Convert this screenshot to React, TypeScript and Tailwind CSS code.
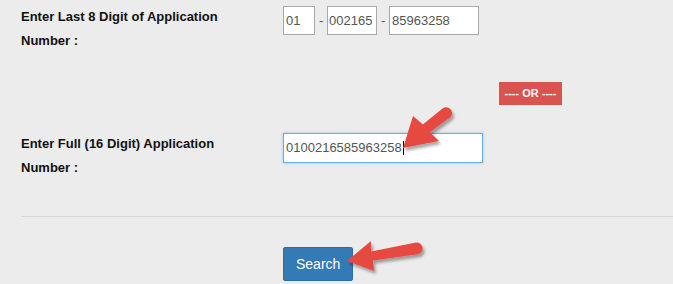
import React from "react";

const font = { fontFamily: '"Liberation Sans", Arial, sans-serif' };

function Arrow({ d }: { d: string }) {
  return <path d={d} fill="#e64a40" filter="url(#arrowShadow)" />;
}

export default function App() {
  return (
    <div
      className="relative w-[673px] h-[284px] overflow-hidden bg-[#ececec] text-black"
      style={font}
    >
      <div className="pt-[5px] pl-[21px]">
        {/* last 8 digit row */}
        <div className="flex">
          <label className="w-[262px] text-[13px] font-bold leading-[24px] text-[#111]">
            Enter Last 8 Digit of Application
            <br />
            Number :
          </label>
          <div className="flex items-center mt-[1px] h-[29px] text-[13px] text-[#555]">
            <div className="flex items-center w-[32px] h-[29px] border border-[#a9a9a9] bg-white pl-[2px]">
              01
            </div>
            <span className="mx-[4px] w-[4px]">-</span>
            <div className="flex items-center w-[50px] h-[29px] border border-[#a9a9a9] bg-white pl-[1px]">
              002165
            </div>
            <span className="mx-[4px] w-[4px]">-</span>
            <div className="flex items-center w-[90px] h-[29px] border border-[#a9a9a9] bg-white pl-[2px]">
              85963258
            </div>
          </div>
        </div>

        {/* or badge */}
        <div className="mt-[29px] ml-[478px] flex items-center justify-center w-[63px] h-[23px] bg-[#d9534f] text-white text-[11px] font-bold">
          ---- OR ----
        </div>

        {/* full number row */}
        <div className="flex mt-[27px]">
          <label className="w-[262px] text-[13px] font-bold leading-[24px] text-[#111]">
            Enter Full (16 Digit) Application
            <br />
            Number :
          </label>
          <div className="flex items-center mt-[1px] w-[200px] h-[30px] border border-[#66afe9] bg-white pl-[2px] text-[13px] text-[#555] shadow-[0_0_3px_rgba(102,175,233,0.6)]">
            0100216585963258
            <span className="ml-[1px] w-[1px] h-[14px] bg-black" />
          </div>
        </div>

        <div className="mt-[36px] border-t border-[#d6d6d6]" />

        <button className="mt-[30px] ml-[262px] px-[12px] py-[6px] leading-[20px] text-[14px] text-white bg-[#337ab7] border border-[#2e6da4] rounded-[2px]">
          Search
        </button>
      </div>

      {/* annotation arrows */}
      <svg className="absolute left-0 top-0" width="673" height="284">
        <defs>
          <filter id="arrowShadow" x="-20%" y="-20%" width="140%" height="140%">
            <feDropShadow dx="2" dy="3" stdDeviation="1.5" floodColor="#000" floodOpacity="0.35" />
          </filter>
        </defs>
        <Arrow d="M403,148 L413,116 L422.8,124.6 L442.5,108.6 A5.8,5.8 0 0 1 449.9,117.6 L429.8,132.3 L439,141 Z" />
        <Arrow d="M347,261 L371,241 L371,251.5 L416,242.5 A6,6 0 0 1 418,254.3 L373,260.5 L374,271 Z" />
      </svg>
    </div>
  );
}
